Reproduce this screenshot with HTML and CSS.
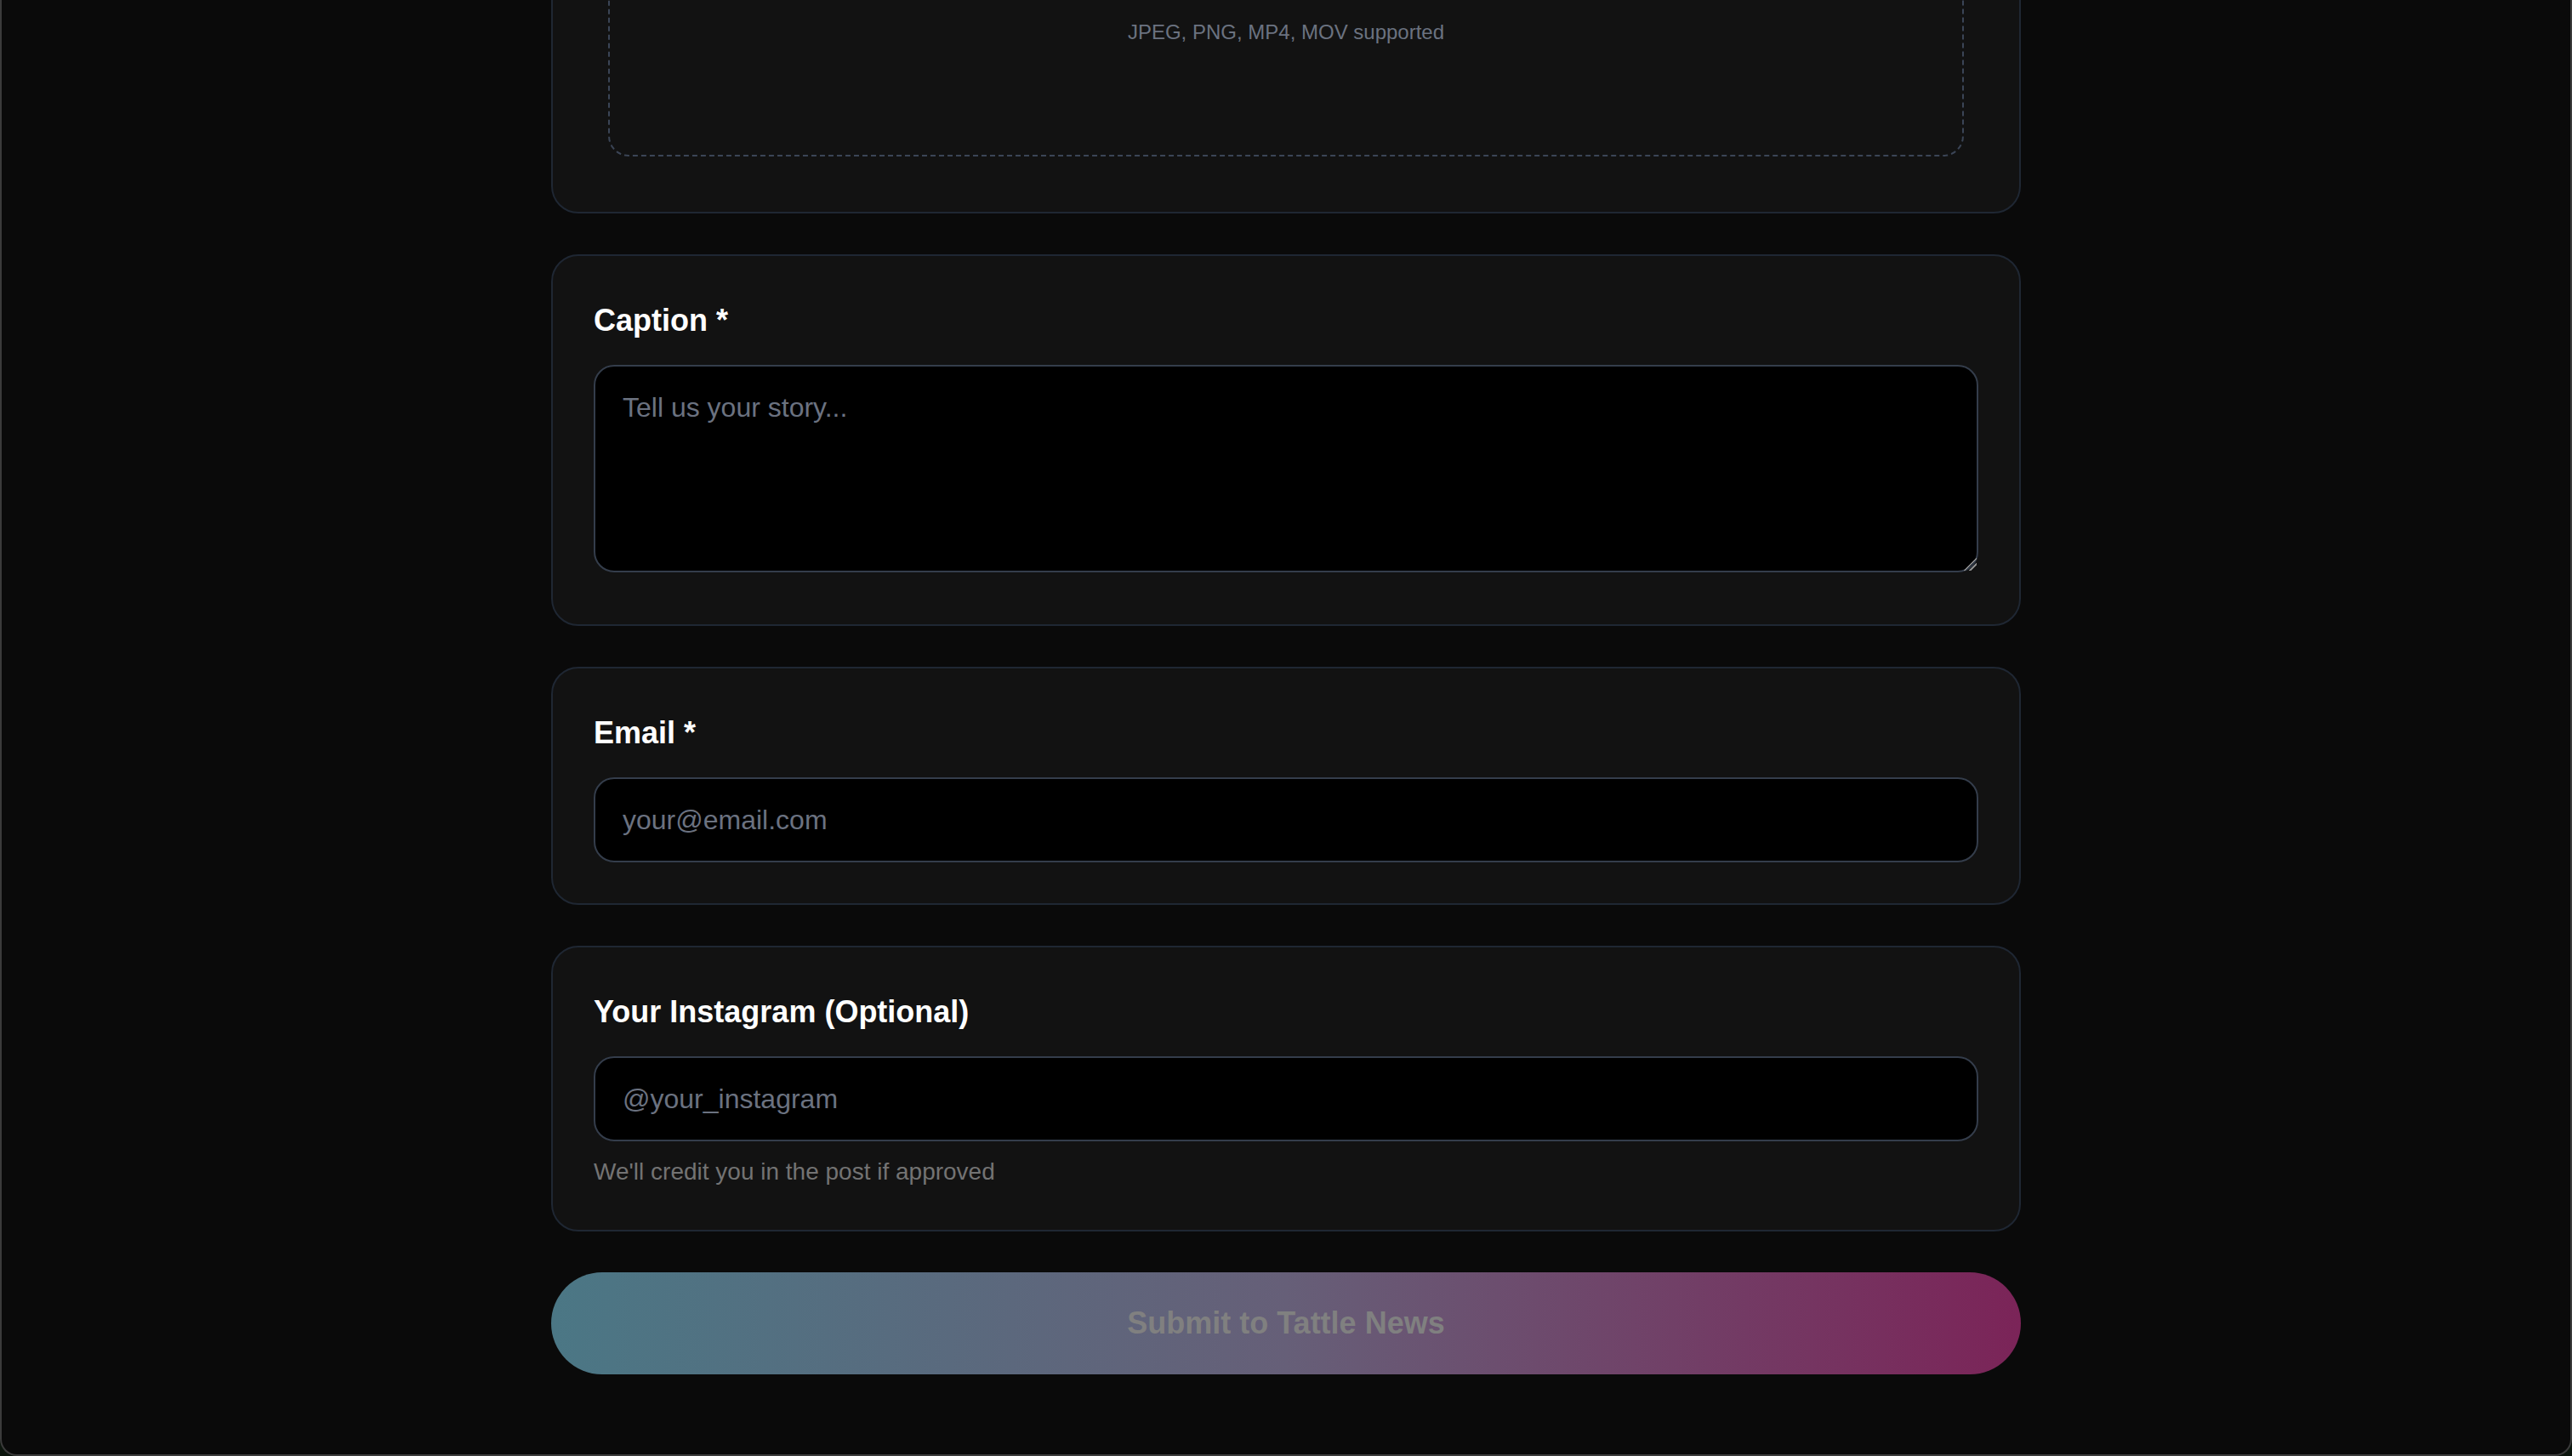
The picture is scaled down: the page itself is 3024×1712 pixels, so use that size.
FILE: index.html
```html
<!DOCTYPE html>
<html lang="en">
<head>
<meta charset="utf-8">
<title>Submit to Tattle News</title>
<link rel="stylesheet" href="styles.css">
</head>
<body>
  <div class="window">
    <main class="container">
      <form class="form">
        <section class="card card-upload">
          <div class="dropzone">
            <svg class="upload-icon" viewBox="0 0 24 24" width="96" height="96" fill="none" stroke="#6b7280" stroke-width="1.5" stroke-linecap="round" stroke-linejoin="round"><path d="M4 16v2a2 2 0 0 0 2 2h12a2 2 0 0 0 2-2v-2"/><path d="M12 4v12"/><path d="M7 9l5-5 5 5"/></svg>
            <p class="drop-hint">JPEG, PNG, MP4, MOV supported</p>
          </div>
        </section>

        <section class="card">
          <label class="label" for="caption">Caption *</label>
          <textarea id="caption" class="field field-area" rows="4" placeholder="Tell us your story..."></textarea>
        </section>

        <section class="card">
          <label class="label" for="email">Email *</label>
          <input id="email" class="field" type="email" placeholder="your@email.com">
        </section>

        <section class="card">
          <label class="label" for="ig">Your Instagram (Optional)</label>
          <input id="ig" class="field" type="text" placeholder="@your_instagram">
          <p class="helper">We'll credit you in the post if approved</p>
        </section>

        <button type="submit" class="submit" disabled>Submit to Tattle News</button>
      </form>
    </main>
  </div>
</body>
</html>
```

FILE: styles.css
```css
html {
  background: #0c150d;
}

body {
  margin: 0;
  height: 100vh;
  font-family: "Liberation Sans", Arial, Helvetica, sans-serif;
}

.window {
  box-sizing: border-box;
  height: 100vh;
  background: #0a0a0a;
  border: 2px solid #3b3b3b;
  border-top: none;
  border-radius: 0 0 20px 20px;
  display: flex;
  flex-direction: column;
  justify-content: flex-end;
  overflow: hidden;
}

.container {
  flex-shrink: 0;
  box-sizing: border-box;
  width: 1792px;
  margin: 0 auto;
  padding: 0 32px 94px;
}

.form {
  display: flex;
  flex-direction: column;
  gap: 48px;
  margin: 0;
}

.card {
  background: #121212;
  border: 2px solid #1f2733;
  border-radius: 32px;
  padding: 48px;
}

.label {
  display: block;
  font-size: 36px;
  line-height: 56px;
  font-weight: 700;
  color: #ffffff;
  margin-bottom: 24px;
}

.dropzone {
  margin: 0 17px 17px;
  border: 2px dashed #3b4556;
  border-radius: 24px;
  padding: 128px 32px;
  text-align: center;
}

.upload-icon {
  display: block;
  margin: 0 auto 48px;
}

.drop-hint {
  margin: 0;
  font-size: 24px;
  line-height: 32px;
  color: #6b7280;
}

.field {
  display: block;
  box-sizing: border-box;
  width: 100%;
  margin: 0;
  background: #000000;
  border: 2px solid #343d4b;
  border-radius: 24px;
  padding: 24px 32px;
  font-family: "Liberation Sans", Arial, Helvetica, sans-serif;
  font-size: 32px;
  line-height: 48px;
  color: #ffffff;
  outline: none;
  color-scheme: dark;
}

.field::placeholder {
  color: #6b7280;
  opacity: 1;
}

.field-area {
  height: 244px;
  margin-bottom: 13px;
  resize: vertical;
}

.field-area::-webkit-resizer {
  background: linear-gradient(135deg, transparent 0 48%, #8a8a8a 48% 56%, transparent 56% 70%, #8a8a8a 70% 78%, transparent 78%);
}

.helper {
  margin: 16px 0 0;
  font-size: 28px;
  line-height: 40px;
  color: #737373;
}

.submit {
  display: block;
  width: 100%;
  height: 120px;
  border: none;
  border-radius: 9999px;
  background: linear-gradient(90deg, #4b7785 0%, #665f78 50%, #7b2458 100%);
  color: #808080;
  font-family: "Liberation Sans", Arial, Helvetica, sans-serif;
  font-size: 36px;
  line-height: 56px;
  font-weight: 700;
  padding: 32px;
}
```
